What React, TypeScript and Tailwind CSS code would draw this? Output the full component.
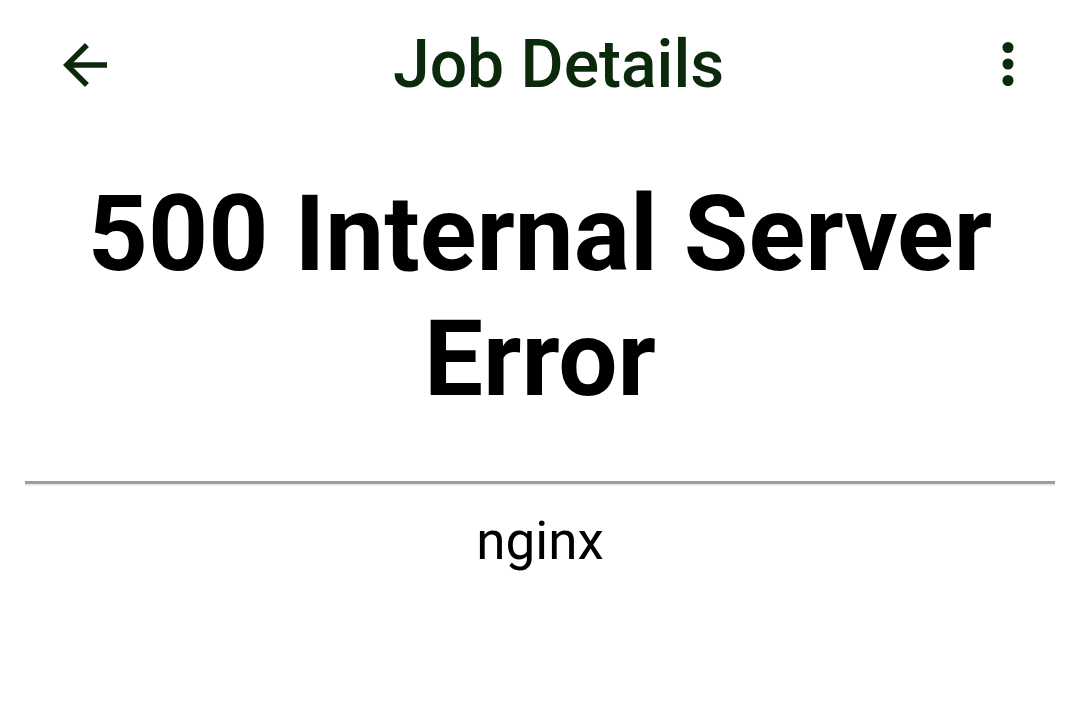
export default function App() {
  return (
    <div className="w-[1080px] h-[726px] bg-white overflow-hidden" style={{ fontFamily: "Roboto, 'Noto Sans', sans-serif" }}>
      {/* Toolbar */}
      <div className="flex items-center h-[130px] pl-[52px] pr-[39px]">
        <svg viewBox="0 0 24 24" className="w-[66px] h-[66px] shrink-0" fill="#0b2a0c">
          <path d="M20 11H7.83l5.59-5.59L12 4l-8 8 8 8 1.41-1.41L7.83 13H20v-2z" />
        </svg>
        <h1 className="ml-[275px] text-[66px] font-medium text-[#0b2a0c] leading-none">Job Details</h1>
        <div className="flex-1" />
        <svg viewBox="0 0 24 24" className="w-[66px] h-[66px] shrink-0 -mt-[3px]" fill="#0b2a0c">
          <circle cx="12" cy="6" r="2" />
          <circle cx="12" cy="12" r="2" />
          <circle cx="12" cy="18" r="2" />
        </svg>
      </div>

      {/* Error page */}
      <div className="px-[25px] pt-[42px]">
        <h2 className="text-center text-[105px] font-bold leading-[125px] text-black">
          500 Internal Server Error
        </h2>
        <div className="mt-[59px] border-t-[3px] border-b-2 border-t-[#9d9d9d] border-b-[#ececec]" />
        <p className="text-center text-[53px] text-black leading-none mt-[29px]">nginx</p>
      </div>
    </div>
  );
}
